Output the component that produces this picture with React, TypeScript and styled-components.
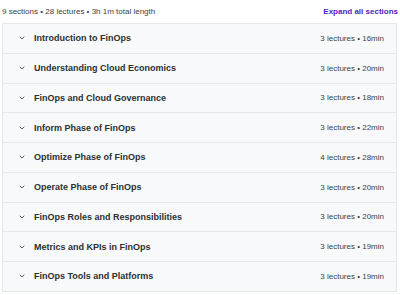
import styled, { createGlobalStyle } from "styled-components";

interface ISection {
  title: string;
  lectures: number;
  length: string;
}

const sections: ISection[] = [
  { title: "Introduction to FinOps", lectures: 3, length: "16min" },
  { title: "Understanding Cloud Economics", lectures: 3, length: "20min" },
  { title: "FinOps and Cloud Governance", lectures: 3, length: "18min" },
  { title: "Inform Phase of FinOps", lectures: 3, length: "22min" },
  { title: "Optimize Phase of FinOps", lectures: 4, length: "28min" },
  { title: "Operate Phase of FinOps", lectures: 3, length: "20min" },
  { title: "FinOps Roles and Responsibilities", lectures: 3, length: "20min" },
  { title: "Metrics and KPIs in FinOps", lectures: 3, length: "19min" },
  { title: "FinOps Tools and Platforms", lectures: 3, length: "19min" },
];

const Chevron = () => (
  <svg width="8" height="8" viewBox="0 0 24 24" fill="none">
    <path
      d="M6 9l6 6 6-6"
      stroke="#2d2f31"
      strokeWidth="2.4"
      strokeLinecap="round"
      strokeLinejoin="round"
    />
  </svg>
);

const Curriculum = () => {
  return (
    <Wrapper>
      <Summary>
        <span>9 sections • 28 lectures • 3h 1m total length</span>
        <ExpandAll>Expand all sections</ExpandAll>
      </Summary>
      <Sections>
        {sections.map((section) => (
          <Row key={section.title}>
            <Title>
              <Chevron />
              {section.title}
            </Title>
            <Meta>
              {section.lectures} lectures • {section.length}
            </Meta>
          </Row>
        ))}
      </Sections>
    </Wrapper>
  );
};

export default function App() {
  return (
    <>
      <GlobalStyle />
      <Curriculum />
    </>
  );
}

const GlobalStyle = createGlobalStyle`
  body {
    margin: 0;
    background: #fff;
    font-family: "Liberation Sans", Arial, sans-serif;
    color: #2d2f31;
  }
`;

const Wrapper = styled.div`
  width: 400px;
  padding: 3px 2px 0 2px;
  box-sizing: border-box;
`;

const Summary = styled.div`
  display: flex;
  justify-content: space-between;
  align-items: center;
  height: 17px;
  margin-bottom: 3px;
  font-size: 8px;
  color: #3e4143;
`;

const ExpandAll = styled.span`
  color: #5022c3;
  font-weight: 700;
  font-size: 8px;
`;

const Sections = styled.div`
  width: 393px;
  border: 1px solid #e4e8eb;
  border-bottom: none;
`;

const Row = styled.div`
  display: flex;
  justify-content: space-between;
  align-items: center;
  height: 28.75px;
  padding: 0 12px 0 15px;
  background: #f7f9fa;
  border-bottom: 1px solid #e4e8eb;
`;

const Title = styled.div`
  display: flex;
  align-items: center;
  gap: 8px;
  font-size: 9px;
  font-weight: 700;
  color: #2d2f31;
`;

const Meta = styled.div`
  font-size: 8px;
  color: #3e4143;
`;
